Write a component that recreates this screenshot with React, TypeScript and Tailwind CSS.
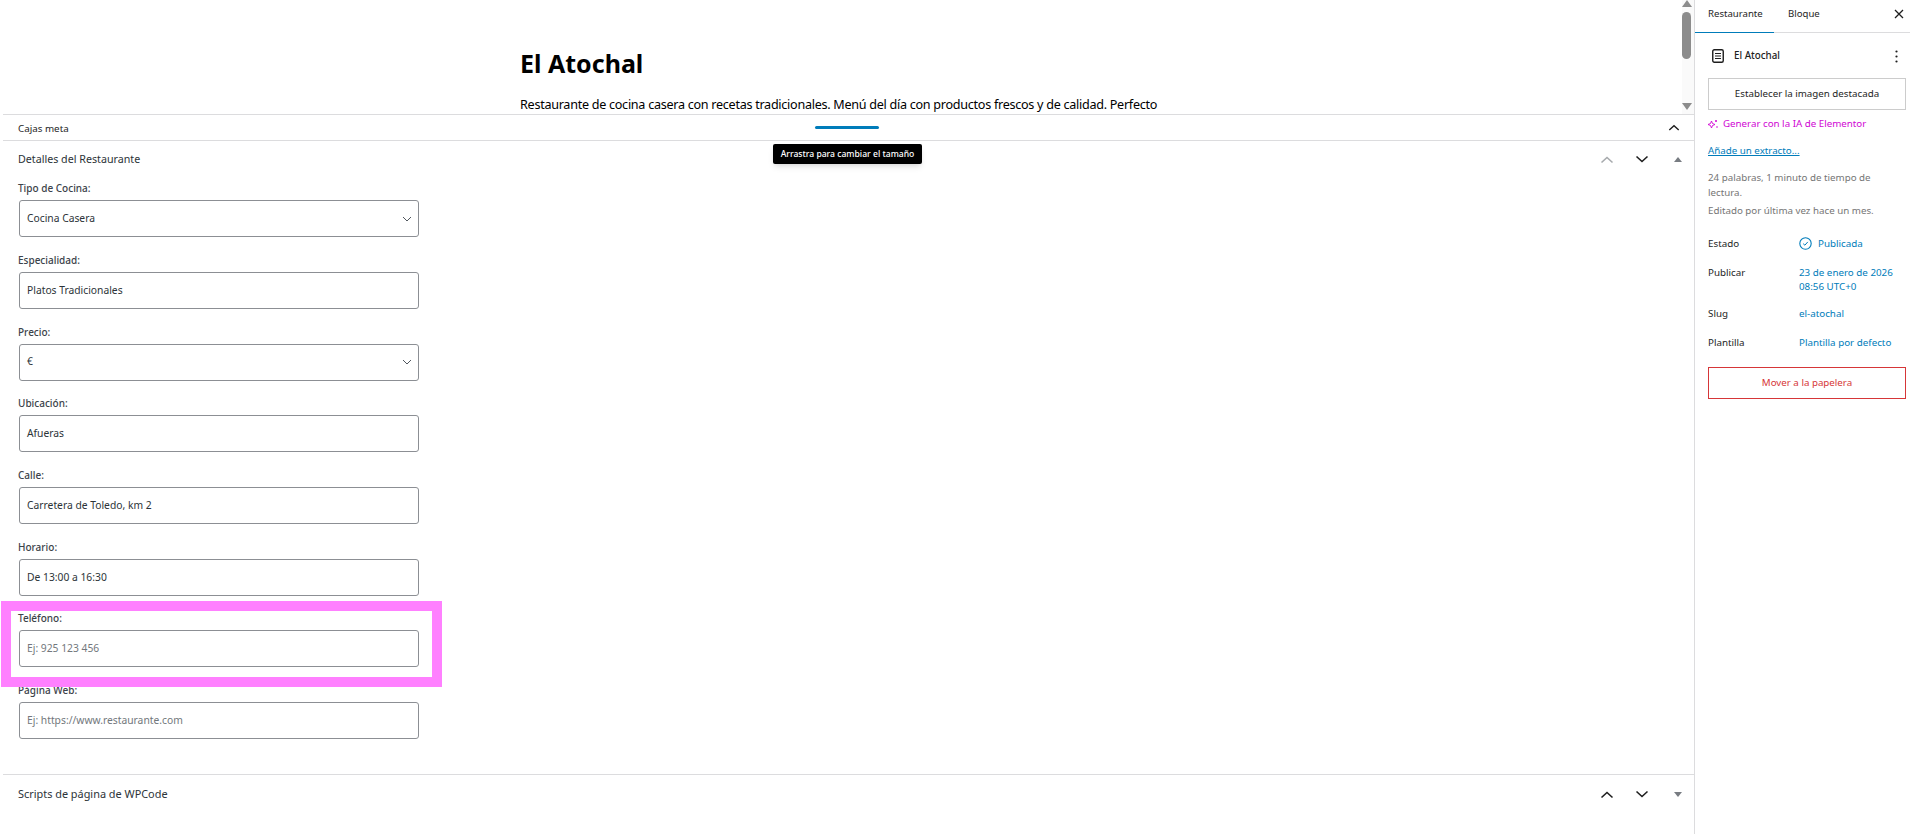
import React from "react";

const Chevron = ({ up = false, className = "" }: { up?: boolean; className?: string }) => (
  <svg width="14" height="9" viewBox="0 0 14 9" fill="none" className={className}>
    <path d={up ? "M1.5 7.5L7 2.5L12.5 7.5" : "M1.5 1.5L7 6.5L12.5 1.5"} stroke="currentColor" strokeWidth="1.6" />
  </svg>
);

const SelectArrow = () => (
  <svg width="10" height="6" viewBox="0 0 10 6" fill="none" className="text-[#50575e]">
    <path d="M1 1L5 5L9 1" stroke="currentColor" strokeWidth="1" />
  </svg>
);

const Field = ({ label, value, placeholder, select, className = "" }: { label: string; value?: string; placeholder?: string; select?: boolean; className?: string }) => (
  <div className={`flex flex-col w-[400px] ${className}`}>
    <div className="h-[18px] -ml-[1px] text-[10px] leading-[13px] font-medium text-[#3c434a]">{label}</div>
    <div className="h-[37px] border border-[#8c8f94] rounded-[3px] flex items-center justify-between pl-[7px] pr-[6px] text-[10.3px]">
      <span className={placeholder ? "text-[#72777c]" : "text-[#2c3338]"}>{value ?? placeholder}</span>
      {select && <SelectArrow />}
    </div>
  </div>
);

const MetaControls = ({ upMuted, triangleUp }: { upMuted?: boolean; triangleUp?: boolean }) => (
  <div className="flex items-center">
    <Chevron up className={upMuted ? "text-[#a7aaad]" : "text-[#1e1e1e]"} />
    <Chevron className="text-[#1e1e1e] ml-[21px]" />
    <svg width="8" height="5" viewBox="0 0 8 5" className="ml-[25px] text-[#787c82]">
      <path d={triangleUp ? "M4 0L8 5H0Z" : "M0 0H8L4 5Z"} fill="currentColor" />
    </svg>
  </div>
);

const Row = ({ label, children, className = "" }: { label: string; children: React.ReactNode; className?: string }) => (
  <div className={`flex text-[9.8px] leading-[14px] ${className}`}>
    <div className="w-[91px] shrink-0 text-[#1e1e1e]">{label}</div>
    <div className="text-[#007cba]">{children}</div>
  </div>
);

export default function App() {
  return (
    <div className="relative flex w-[1910px] h-[834px] overflow-hidden bg-white text-[#1e1e1e] font-['Noto_Sans','Open_Sans',sans-serif]">
      <main className="w-[1695px] shrink-0 border-r border-[#dcdcde] flex flex-col">
        {/* Editor canvas */}
        <section className="h-[114px] flex shrink-0 overflow-hidden">
          <div className="flex-1 pl-[520px] pt-[45px]">
            <h1 className="text-[25px] leading-[36px] font-bold text-black">El Atochal</h1>
            <p className="mt-[14px] text-[12.6px] leading-[20px] tracking-[-0.28px] text-black whitespace-nowrap">
              Restaurante de cocina casera con recetas tradicionales. Menú del día con productos frescos y de calidad. Perfecto
            </p>
          </div>
          <div className="w-[12px] flex flex-col items-start bg-[#fafafa]">
            <svg width="10" height="7" viewBox="0 0 10 7" className="text-[#8c8c8c]"><path d="M5 0L10 7H0Z" fill="currentColor" /></svg>
            <div className="w-[9px] h-[47px] mt-[5px] rounded-full bg-[#8c8c8c]" />
            <svg width="10" height="7" viewBox="0 0 10 7" className="mt-[44px] text-[#8c8c8c]"><path d="M0 0H10L5 7Z" fill="currentColor" /></svg>
          </div>
        </section>

        {/* Meta boxes header */}
        <div className="ml-[3px] h-[27px] shrink-0 border-y border-[#dcdcde] flex items-center justify-between pl-[15px] pr-[14px] relative">
          <span className="text-[9.8px] pt-[4px] text-[#1e1e1e]">Cajas meta</span>
          <div className="absolute left-[812px] top-[11px] w-[64px] h-[3px] rounded-full bg-[#007cba]" />
          <Chevron up className="text-[#1e1e1e] w-[12px]" />
        </div>

        {/* Detalles del Restaurante */}
        <section className="ml-[3px] h-[634px] shrink-0 border-b border-[#dcdcde]">
          <div className="h-[36px] flex items-center justify-between pl-[15px] pr-[12px]">
            <span className="text-[10.7px] text-[#2c3338]">Detalles del Restaurante</span>
            <MetaControls upMuted triangleUp />
          </div>
          <div className="pl-[16px] pt-[5px]">
            <Field label="Tipo de Cocina:" value="Cocina Casera" select />
            <Field label="Especialidad:" value="Platos Tradicionales" className="mt-[17px]" />
            <Field label="Precio:" value="€" select className="mt-[16.5px]" />
            <Field label="Ubicación:" value="Afueras" className="mt-[16.5px]" />
            <Field label="Calle:" value="Carretera de Toledo, km 2" className="mt-[17px]" />
            <Field label="Horario:" value="De 13:00 a 16:30" className="mt-[17px]" />
            <Field label="Teléfono:" placeholder="Ej: 925 123 456" className="mt-[16px]" />
            <Field label="Página Web:" placeholder="Ej: https://www.restaurante.com" className="mt-[17px]" />
          </div>
        </section>

        {/* WPCode */}
        <div className="ml-[3px] h-[38px] shrink-0 flex items-center justify-between pl-[15px] pr-[12px]">
          <span className="text-[10.9px] text-[#2c3338]">Scripts de página de WPCode</span>
          <MetaControls />
        </div>
      </main>

      {/* Sidebar */}
      <aside className="flex-1 flex flex-col">
        <div className="h-[33px] shrink-0 border-b border-[#dcdcde] flex items-stretch relative text-[9.6px]">
          <div className="w-[79px] -mb-px border-b border-[#007cba] pl-[13px] pt-[7px] text-[#1e1e1e]">Restaurante</div>
          <div className="pl-[14px] pt-[7px] text-[#1e1e1e]">Bloque</div>
          <svg width="10" height="10" viewBox="0 0 10 10" className="absolute right-[6px] top-[9px]"><path d="M1 1L9 9M9 1L1 9" stroke="#1e1e1e" strokeWidth="1.3" /></svg>
        </div>
        <div className="pl-[13px] pr-[4px]">
          <div className="h-[44px] pt-[2px] flex items-center">
            <svg width="12" height="14" viewBox="0 0 12 14" fill="none" className="ml-[4px]">
              <rect x="0.75" y="0.75" width="10.5" height="12.5" rx="1.5" stroke="#1e1e1e" strokeWidth="1.4" />
              <path d="M3 4.5H9M3 7H9M3 9.5H9" stroke="#1e1e1e" strokeWidth="1.1" />
            </svg>
            <span className="ml-[10px] text-[9.8px] font-medium text-[#1e1e1e]">El Atochal</span>
            <svg width="3" height="13" viewBox="0 0 3 13" className="ml-auto mr-[8px]">
              <circle cx="1.5" cy="1.5" r="1.1" fill="#1e1e1e" /><circle cx="1.5" cy="6.5" r="1.1" fill="#1e1e1e" /><circle cx="1.5" cy="11.5" r="1.1" fill="#1e1e1e" />
            </svg>
          </div>
          <div className="mt-[1px] h-[32px] w-[198px] pt-[1px] border border-[#cccccc] flex items-center justify-center text-[9.75px] text-[#1e1e1e]">
            Establecer la imagen destacada
          </div>
          <div className="mt-[7px] flex items-center text-[9.75px] leading-[14px] text-[#d004d4]">
            <svg width="10" height="10" viewBox="0 0 10 10" fill="none" className="mr-[5px]">
              <path d="M3.5 2L4.5 4.5L7 5.5L4.5 6.5L3.5 9L2.5 6.5L0 5.5L2.5 4.5Z" stroke="currentColor" strokeWidth="0.9" />
              <circle cx="8" cy="2" r="1" fill="currentColor" /><circle cx="9" cy="8" r="0.8" fill="currentColor" />
            </svg>
            Generar con la IA de Elementor
          </div>
          <div className="mt-[13px] text-[9.75px] leading-[14px] text-[#007cba] underline">Añade un extracto...</div>
          <div className="mt-[13px] w-[190px] text-[9.75px] leading-[14.5px] text-[#757575]">24 palabras, 1 minuto de tiempo de lectura.</div>
          <div className="mt-[4px] text-[9.75px] leading-[14.5px] text-[#757575]">Editado por última vez hace un mes.</div>
          <Row label="Estado" className="mt-[18px] items-center">
            <span className="flex items-center">
              <svg width="13" height="13" viewBox="0 0 13 13" fill="none" className="mr-[6px]">
                <circle cx="6.5" cy="6.5" r="5.7" stroke="currentColor" strokeWidth="1.1" />
                <path d="M4.2 6.7L5.9 8.2L8.8 4.9" stroke="currentColor" strokeWidth="1" />
              </svg>
              Publicada
            </span>
          </Row>
          <Row label="Publicar" className="mt-[15px]">
            <div>23 de enero de 2026</div>
            <div>08:56 UTC+0</div>
          </Row>
          <Row label="Slug" className="mt-[13px]">el-atochal</Row>
          <Row label="Plantilla" className="mt-[15px]">Plantilla por defecto</Row>
          <div className="mt-[17px] h-[32px] w-[198px] pt-[2px] border border-[#d63638] flex items-center justify-center text-[9.75px] text-[#d63638]">
            Mover a la papelera
          </div>
        </div>
      </aside>

      {/* Tooltip */}
      <div className="absolute left-[773px] top-[144px] w-[149px] h-[20px] bg-black rounded-[2px] shadow-md flex items-center justify-center text-[8.6px] font-medium text-white whitespace-nowrap">
        Arrastra para cambiar el tamaño
      </div>
      {/* Highlight annotation */}
      <div className="absolute left-[1px] top-[601px] w-[441px] h-[86px] border-[10px] border-[#ff80ff] pointer-events-none" />
    </div>
  );
}
